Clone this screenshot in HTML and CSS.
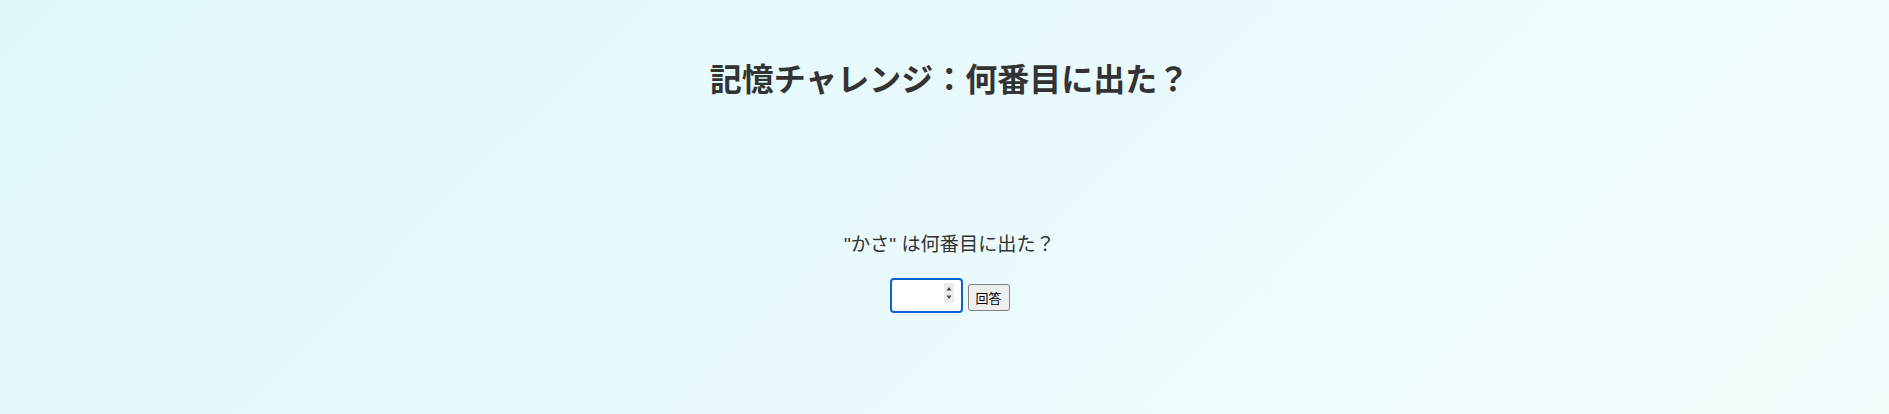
FILE: index.html
```html
<!DOCTYPE html>
<html lang="ja">
<head>
<meta charset="utf-8">
<title>記憶チャレンジ</title>
<link rel="stylesheet" href="styles.css">
</head>
<body>
<main class="app">
  <h1 class="title">記憶チャレンジ：何番目に出た？</h1>
  <div class="stage"></div>
  <p class="question">"かさ" は何番目に出た？</p>
  <div class="controls">
    <div class="num-wrap">
      <input class="num-input" type="number">
      <span class="spinner">
        <svg width="10" height="20" viewBox="0 0 10 20"><path d="M2.5 7.5 L5 4 L7.5 7.5 Z" fill="#444"/><path d="M2.5 12.5 L5 16 L7.5 12.5 Z" fill="#444"/></svg>
      </span>
    </div>
    <button class="answer-btn" type="button">回答</button>
  </div>
</main>
</body>
</html>
```
FILE: styles.css
```css
html, body {
  margin: 0;
  height: 100%;
}
body {
  font-family: "Liberation Sans", "Noto Sans CJK JP", sans-serif;
  color: #333;
  background: linear-gradient(135deg, #dff7fa 0%, #f4fdfe 100%);
  min-height: 100vh;
}
.app {
  padding: 60px 0 0 10px;
  text-align: center;
}
.title {
  margin: 0;
  font-size: 32px;
  line-height: 40px;
  font-weight: bold;
  color: #333;
}
.stage {
  height: 133px;
}
.question {
  margin: 0;
  font-size: 19.2px;
  line-height: 24px;
  color: #333;
}
.controls {
  display: flex;
  justify-content: center;
  align-items: flex-start;
  gap: 5px;
  margin-top: 21px;
}
.num-wrap {
  position: relative;
  width: 73px;
  height: 35px;
}
.num-input {
  box-sizing: border-box;
  width: 73px;
  height: 35px;
  margin: 0;
  padding: 2px 4px;
  border: 2px solid #0b62d6;
  border-radius: 4px;
  background: #fff;
  font-size: 16px;
  outline: none;
  -moz-appearance: textfield;
}
.num-input::-webkit-inner-spin-button,
.num-input::-webkit-outer-spin-button {
  -webkit-appearance: none;
  margin: 0;
}
.spinner {
  position: absolute;
  right: 9px;
  top: 5px;
  width: 10px;
  height: 20px;
  background: #ececec;
  display: flex;
}
.answer-btn {
  box-sizing: border-box;
  margin-top: 6px;
  height: 27px;
  width: 42px;
  padding: 0;
  font-family: "Liberation Sans", "Noto Sans CJK JP", sans-serif;
  font-size: 13px;
  color: #000;
  background: #efefef;
  border: 1px solid #808080;
  border-radius: 3px;
}
```
